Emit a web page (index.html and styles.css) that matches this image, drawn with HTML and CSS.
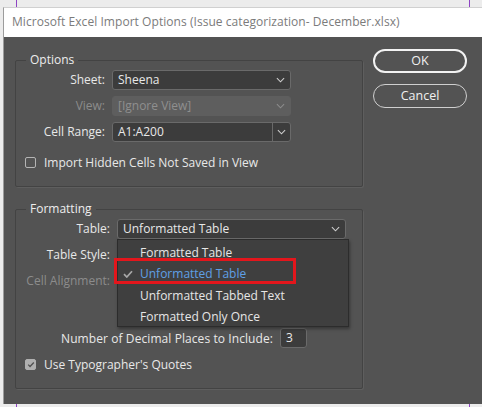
FILE: index.html
```html
<!DOCTYPE html>
<html>
<head>
<meta charset="utf-8">
<link rel="stylesheet" href="styles.css">
</head>
<body>
<div class="dialog">
  <div class="titlebar">Microsoft Excel Import Options (Issue categorization- December.xlsx)</div>
  <div class="content">
    <div class="groups">
      <fieldset class="group options">
        <legend>Options</legend>
        <div class="grid grid-options">
          <label class="lbl">Sheet:</label>
          <div class="select"><span>Sheena</span><svg class="chev" viewBox="0 0 10 6"><path d="M1 1l4 4 4-4"/></svg></div>
          <label class="lbl disabled">View:</label>
          <div class="select dis"><span>[Ignore View]</span><svg class="chev" viewBox="0 0 10 6"><path d="M1 1l4 4 4-4"/></svg></div>
          <label class="lbl">Cell Range:</label>
          <div class="combo"><div class="combo-input">A1:A200</div><div class="combo-btn"><svg class="chev" viewBox="0 0 10 6"><path d="M1 1l4 4 4-4"/></svg></div></div>
        </div>
        <div class="check-row hidden-cells"><span class="box"></span><span>Import Hidden Cells Not Saved in View</span></div>
      </fieldset>
      <fieldset class="group formatting">
        <legend>Formatting</legend>
        <div class="grid grid-format">
          <label class="lbl">Table:</label>
          <div class="select open"><span>Unformatted Table</span><svg class="chev" viewBox="0 0 10 6"><path d="M1 1l4 4 4-4"/></svg>
            <ul class="menu">
              <li>Formatted Table</li>
              <li class="sel"><svg class="tick" viewBox="0 0 10 8"><path d="M1 4.2l2.8 2.8L9 1.2"/></svg>Unformatted Table</li>
              <li>Unformatted Tabbed Text</li>
              <li>Formatted Only Once</li>
            </ul>
            <div class="highlight"></div>
          </div>
          <label class="lbl">Table Style:</label>
          <div class="select"></div>
          <label class="lbl disabled">Cell Alignment:</label>
          <div class="select dis"></div>
        </div>
        <div class="decimal-row"><span>Number of Decimal Places to Include:</span><div class="num">3</div></div>
        <div class="check-row quotes"><span class="box checked"><svg viewBox="0 0 10 8"><path d="M1.5 4.2l2.3 2.3L8.5 1.5"/></svg></span><span>Use Typographer's Quotes</span></div>
      </fieldset>
    </div>
    <div class="buttons">
      <div class="btn default">OK</div>
      <div class="btn">Cancel</div>
    </div>
  </div>
</div>
</body>
</html>
```

FILE: styles.css
```css
html, body {
  margin: 0;
  padding: 0;
}
body {
  width: 482px;
  height: 407px;
  overflow: hidden;
  background-color: #ececec;
  background-image:
    linear-gradient(to right, transparent 16px, #8e44c4 16px, #8e44c4 17px, transparent 17px),
    linear-gradient(to right, transparent 469px, #8e44c4 469px, #8e44c4 470px, transparent 470px);
  font-family: "Open Sans", "Noto Sans", sans-serif;
  font-size: 12px;
  color: #e8e8e8;
}
.dialog {
  margin-top: 7px;
  margin-left: 3px;
  width: 479px;
  height: 397px;
  border-left: 1px solid #9c9c9c;
  border-top: 1px solid #d0d0d0;
  box-sizing: border-box;
  display: flex;
  flex-direction: column;
}
.titlebar {
  height: 29px;
  line-height: 28px;
  background: #ffffff;
  color: #7b7b7b;
  padding-left: 8px;
  font-size: 12px;
  letter-spacing: 0.05px;
  white-space: nowrap;
  flex: none;
}
.content {
  flex: 1;
  background: #535353;
  display: flex;
  padding: 15px 0 0 11px;
}
.groups {
  width: 348px;
  flex: none;
}
.group {
  margin: 0;
  padding: 0;
  border: 1px solid #434343;
  border-radius: 2px;
  box-shadow: 1px 1px 0 #5e5e5e;
  min-width: 0;
}
.group legend {
  margin-left: 10px;
  padding: 0 4px;
  line-height: 16px;
  color: #ededed;
}
.grid {
  display: grid;
  column-gap: 7px;
  row-gap: 6px;
  grid-auto-rows: 20px;
}
.grid-options {
  grid-template-columns: 89px 179px;
  padding-top: 2px;
}
.grid-format {
  grid-template-columns: 94px 229px;
  padding-top: 2px;
}
.lbl {
  text-align: right;
  line-height: 20px;
  white-space: nowrap;
}
.lbl.disabled {
  color: #8c8c8c;
}
.select {
  position: relative;
  box-sizing: border-box;
  height: 20px;
  background: #3c3c3c;
  border: 1px solid #6a6a6a;
  border-radius: 3px;
  display: flex;
  align-items: center;
  padding-left: 5px;
  line-height: 18px;
  white-space: nowrap;
}
.select span {
  flex: 1;
}
.select.dis {
  background: #5e5e5e;
  border-color: #5e5e5e;
  color: #8f8f8f;
}
.chev {
  width: 9px;
  height: 6px;
  margin-right: 5px;
  fill: none;
  stroke: #cfcfcf;
  stroke-width: 1.2;
}
.select.dis .chev {
  stroke: #8c8c8c;
}
.combo {
  display: flex;
  height: 20px;
  box-sizing: border-box;
  border: 1px solid #6a6a6a;
  border-radius: 3px;
  background: #3c3c3c;
}
.combo-input {
  flex: 1;
  padding-left: 5px;
  line-height: 18px;
}
.combo-btn {
  width: 17px;
  border-left: 1px solid #6a6a6a;
  display: flex;
  align-items: center;
  justify-content: center;
}
.combo-btn .chev {
  margin-right: 0;
}
.check-row {
  display: flex;
  align-items: center;
  height: 20px;
  padding-left: 9px;
  white-space: nowrap;
}
.hidden-cells {
  margin-top: 10px;
  margin-bottom: 14px;
}
.box {
  width: 11px;
  height: 11px;
  box-sizing: border-box;
  border: 1px solid #b4b4b4;
  border-radius: 2px;
  margin-right: 8px;
  flex: none;
  display: flex;
  align-items: center;
  justify-content: center;
}
.box.checked {
  background: #b0b0b0;
  border-color: #b0b0b0;
}
.box svg {
  width: 8px;
  height: 7px;
  fill: none;
  stroke: #505050;
  stroke-width: 1.6;
}
.menu {
  position: absolute;
  left: -1px;
  top: 19px;
  width: 232px;
  box-sizing: border-box;
  margin: 0;
  padding: 1px 0 0 0;
  list-style: none;
  background: #3f3f3f;
  border: 1px solid #2c2c2c;
  box-shadow: 1px 2px 3px rgba(0,0,0,0.35);
  z-index: 5;
}
.menu li {
  position: relative;
  height: 21.3px;
  line-height: 23px;
  padding-left: 22px;
  color: #e6e6e6;
}
.menu li.sel {
  color: #5fa0e6;
}
.tick {
  position: absolute;
  left: 5px;
  top: 8px;
  width: 10px;
  height: 8px;
  fill: none;
  stroke: #a8a8a8;
  stroke-width: 1.7;
}
.highlight {
  position: absolute;
  left: -4px;
  top: 38px;
  width: 182px;
  height: 26px;
  box-sizing: border-box;
  border: 3px solid #e3161c;
  z-index: 6;
}
.decimal-row {
  display: flex;
  align-items: center;
  justify-content: flex-end;
  width: 291px;
  margin-top: 37px;
  height: 20px;
  white-space: nowrap;
  letter-spacing: 0.08px;
}
.num {
  width: 27px;
  height: 20px;
  box-sizing: border-box;
  margin-left: 7px;
  background: #3c3c3c;
  border: 1px solid #6a6a6a;
  border-radius: 3px;
  padding-left: 5px;
  line-height: 18px;
}
.quotes {
  margin-top: 6px;
  margin-bottom: 14px;
}
.formatting {
  margin-top: 14px;
}
.buttons {
  margin-left: 10px;
  padding-top: 0;
  margin-top: -3px;
  display: flex;
  flex-direction: column;
  gap: 11px;
}
.btn {
  width: 94px;
  height: 24px;
  box-sizing: border-box;
  border: 1px solid #cfcfcf;
  border-radius: 12px;
  text-align: center;
  line-height: 22px;
  font-size: 12.5px;
  color: #f0f0f0;
}
.btn.default {
  border: 2px solid #f2f2f2;
  line-height: 20px;
}
```
